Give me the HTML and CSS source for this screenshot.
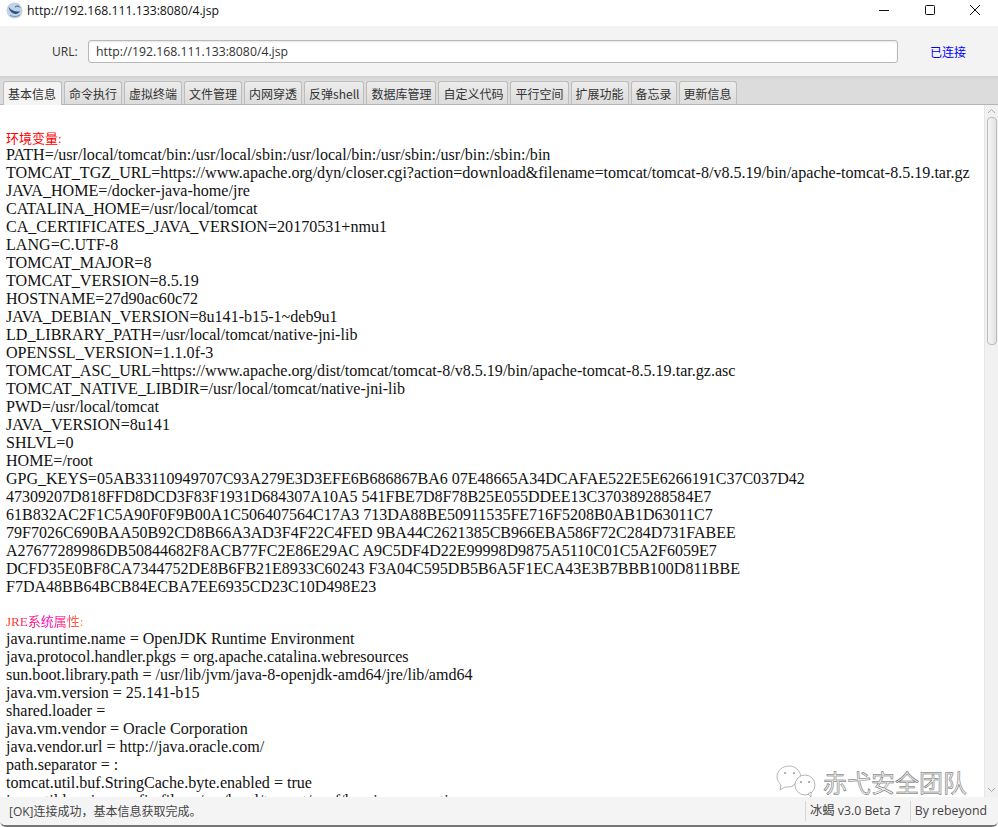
FILE: index.html
```html
<!DOCTYPE html>
<html lang="zh">
<head>
<meta charset="utf-8">
<title>Behinder</title>
<link rel="stylesheet" href="styles.css">
</head>
<body>
<div class="window">
  <header class="titlebar">
    <svg class="app-icon" width="17" height="17" viewBox="0 0 17 17"><circle cx="8.500" cy="8.500" r="8" fill="#bfd2e6"/><path d="M2.500 4.500c1 2 2.500 3 4.500 4s4.500 1.500 7 .5c-1 2.500-4 3.500-6.500 2.500S3 8 2.500 4.500z" fill="#2c4f7f"/><path d="M4 13c3 2 7 2 10 0" fill="none" stroke="#6f8fb3"/><path d="M9 5c2-1.500 4-1 5 .5" fill="none" stroke="#2c4f7f"/></svg>
    <span class="title-text">http://192.168.111.133:8080/4.jsp</span>
    <div class="win-controls">
      <svg width="12" height="12" viewBox="0 0 12 12"><path d="M1 6.500h10" stroke="#111" fill="none"/></svg>
      <svg width="12" height="12" viewBox="0 0 12 12"><rect x="1.500" y="1.500" width="9" height="9" rx="1" stroke="#111" fill="none"/></svg>
      <svg width="12" height="12" viewBox="0 0 12 12"><path d="M1 1l10 10M11 1L1 11" stroke="#111" fill="none"/></svg>
    </div>
  </header>
  <div class="urlbar">
    <label class="url-label">URL:</label>
    <div class="url-input">http://192.168.111.133:8080/4.jsp</div>
    <span class="url-status">已连接</span>
  </div>
  <nav class="tabs">
    <span class="tab active">基本信息</span>
    <span class="tab">命令执行</span>
    <span class="tab">虚拟终端</span>
    <span class="tab">文件管理</span>
    <span class="tab">内网穿透</span>
    <span class="tab">反弹shell</span>
    <span class="tab">数据库管理</span>
    <span class="tab">自定义代码</span>
    <span class="tab">平行空间</span>
    <span class="tab">扩展功能</span>
    <span class="tab">备忘录</span>
    <span class="tab">更新信息</span>
  </nav>
  <main class="content">
    <div class="doc">
      <div class="doc-text">
        <p class="spacer">&nbsp;</p>
        <p class="heading">环境变量:</p>
        <p>PATH=/usr/local/tomcat/bin:/usr/local/sbin:/usr/local/bin:/usr/sbin:/usr/bin:/sbin:/bin</p>
        <p>TOMCAT_TGZ_URL=https://www.apache.org/dyn/closer.cgi?action=download&amp;filename=tomcat/tomcat-8/v8.5.19/bin/apache-tomcat-8.5.19.tar.gz</p>
        <p>JAVA_HOME=/docker-java-home/jre</p>
        <p>CATALINA_HOME=/usr/local/tomcat</p>
        <p>CA_CERTIFICATES_JAVA_VERSION=20170531+nmu1</p>
        <p>LANG=C.UTF-8</p>
        <p>TOMCAT_MAJOR=8</p>
        <p>TOMCAT_VERSION=8.5.19</p>
        <p>HOSTNAME=27d90ac60c72</p>
        <p>JAVA_DEBIAN_VERSION=8u141-b15-1~deb9u1</p>
        <p>LD_LIBRARY_PATH=/usr/local/tomcat/native-jni-lib</p>
        <p>OPENSSL_VERSION=1.1.0f-3</p>
        <p>TOMCAT_ASC_URL=https://www.apache.org/dist/tomcat/tomcat-8/v8.5.19/bin/apache-tomcat-8.5.19.tar.gz.asc</p>
        <p>TOMCAT_NATIVE_LIBDIR=/usr/local/tomcat/native-jni-lib</p>
        <p>PWD=/usr/local/tomcat</p>
        <p>JAVA_VERSION=8u141</p>
        <p>SHLVL=0</p>
        <p>HOME=/root</p>
        <p class="hex">GPG_KEYS=05AB33110949707C93A279E3D3EFE6B686867BA6 07E48665A34DCAFAE522E5E6266191C37C037D42</p>
        <p class="hex">47309207D818FFD8DCD3F83F1931D684307A10A5 541FBE7D8F78B25E055DDEE13C370389288584E7</p>
        <p class="hex">61B832AC2F1C5A90F0F9B00A1C506407564C17A3 713DA88BE50911535FE716F5208B0AB1D63011C7</p>
        <p class="hex">79F7026C690BAA50B92CD8B66A3AD3F4F22C4FED 9BA44C2621385CB966EBA586F72C284D731FABEE</p>
        <p class="hex">A27677289986DB50844682F8ACB77FC2E86E29AC A9C5DF4D22E99998D9875A5110C01C5A2F6059E7</p>
        <p class="hex">DCFD35E0BF8CA7344752DE8B6FB21E8933C60243 F3A04C595DB5B6A5F1ECA43E3B7BBB100D811BBE</p>
        <p class="hex">F7DA48BB64BCB84ECBA7EE6935CD23C10D498E23</p>
        <p class="spacer lower">&nbsp;</p>
        <p class="heading jre">JRE系统属性:</p>
        <p>java.runtime.name = OpenJDK Runtime Environment</p>
        <p>java.protocol.handler.pkgs = org.apache.catalina.webresources</p>
        <p>sun.boot.library.path = /usr/lib/jvm/java-8-openjdk-amd64/jre/lib/amd64</p>
        <p>java.vm.version = 25.141-b15</p>
        <p>shared.loader =</p>
        <p>java.vm.vendor = Oracle Corporation</p>
        <p>java.vendor.url = http://java.oracle.com/</p>
        <p>path.separator = :</p>
        <p>tomcat.util.buf.StringCache.byte.enabled = true</p>
        <p>java.util.logging.config.file = /usr/local/tomcat/conf/logging.properties</p>
      </div>
    </div>
    <div class="scrollbar">
      <svg class="arrow" width="9" height="6" viewBox="0 0 9 6"><path d="M1 5l3.500-3.500L8 5" stroke="#a9a9a9" fill="none"/></svg>
      <div class="thumb"></div>
      <div class="track"></div>
      <svg class="arrow" width="9" height="6" viewBox="0 0 9 6"><path d="M1 1l3.500 3.500L8 1" stroke="#a9a9a9" fill="none"/></svg>
    </div>
    <div class="watermark">
      <svg width="40" height="33" viewBox="0 0 40 33"><g fill="#fff" stroke="#a3a3a3" stroke-width=".8"><path d="M13 1C6 1 1 6 1 12c0 3 2 6 4 8l-1 5 5-3c2 0 6 0 8-1l8-9C24 5 19 1 13 1z"/><ellipse cx="29" cy="20" rx="10" ry="10"/><path d="M32 29l3 3 0-5z"/></g><circle cx="9" cy="8" r="1" fill="#9a9a9a"/><circle cx="18" cy="8" r="1" fill="#9a9a9a"/><circle cx="25" cy="17" r="1" fill="#9a9a9a"/><circle cx="33" cy="17" r="1" fill="#9a9a9a"/></svg>
      <span class="wm-text">赤弋安全团队</span>
    </div>
  </main>
  <footer class="statusbar">
    <span class="status-msg">[OK]连接成功，基本信息获取完成。</span>
    <span class="status-cell ver">冰蝎 v3.0 Beta 7</span>
    <span class="status-cell by">By rebeyond</span>
  </footer>
</div>
</body>
</html>
```

FILE: styles.css
```css
* { box-sizing: border-box; }
html, body { margin: 0; height: 100%; overflow: hidden; background: #fff; }
.window {
  width: 998px; height: 827px; display: flex; flex-direction: column; position: relative; overflow: hidden;
  font-family: "Open Sans", "Noto Sans CJK SC", sans-serif; color: #333;
  border-bottom: 2px solid #777; border-radius: 0 0 6px 6px;
}
.titlebar { height: 26px; flex: none; display: flex; align-items: center; padding: 0 0 5px 6px; background: #fff; }
.app-icon { flex: none; }
.title-text { margin-left: 4px; font: 12.25px/20px "Open Sans", "Noto Sans CJK SC", sans-serif; color: #111; }
.win-controls { margin-left: auto; display: flex; gap: 33.500px; padding-right: 17px; margin-top: -1px; }
.urlbar { height: 50px; flex: none; display: flex; align-items: center; background: #f3f3f3; padding-left: 52px; }
.url-label { font-size: 12px; width: 36px; }
.url-input {
  width: 810px; height: 23px; background: #fff; border: 1px solid #b8b8b8; border-radius: 3px;
  font-size: 12.25px; line-height: 21px; padding-left: 7px; box-shadow: inset 0 1px 2px #e6e6e6;
}
.url-status { margin-left: 32px; font: 12px "Noto Sans CJK SC", sans-serif; color: #0000ff; }
.tabs {
  height: 29px; flex: none; display: flex; align-items: flex-end; gap: 2px; padding-left: 3px;
  background: linear-gradient(#cfcfcf, #dcdcdc 4px); border-bottom: 1px solid #b5b5b5;
}
.tab {
  height: 23px; padding: 0 4px; font: 12px/23px "Noto Sans CJK SC", sans-serif; color: #333; white-space: nowrap;
  background: linear-gradient(#ececec, #dcdcdc); border: 1px solid #bdbdbd; border-bottom: 0; border-radius: 3px 3px 0 0;
}
.tab.active { background: #f4f4f4; margin-bottom: -1px; height: 24px; padding: 0 5px 0 4px; }
.content { flex: 1; min-height: 0; display: flex; position: relative; background: #fff; }
.doc { flex: 1; min-width: 0; overflow: hidden; padding: 9px 0 0 6px; }
.doc-text { font: 16.08px/18px "Liberation Serif", "Noto Sans CJK SC", serif; color: #111; }
.doc-text p { margin: 0; white-space: nowrap; }
.doc-text .hex { font-size: 16.02px; }
.doc-text .spacer { height: 16px; }
.doc-text .spacer.lower { height: 17px; }
.doc-text .heading { color: #f00; font-size: 13px; line-height: 17px; height: 17px; margin-bottom: -1px; }
.doc-text .jre { background: linear-gradient(90deg, #ff3c00, #ff00c8 50%, #ff9000); -webkit-background-clip: text; background-clip: text; color: transparent; width: 84px; margin-bottom: 0; }
.scrollbar { width: 14px; flex: none; background: #f1f1f1; display: flex; flex-direction: column; align-items: center; border-left: 1px solid #e6e6e6; padding: 3px 0 4px; }
.arrow { flex: none; }
.thumb { width: 10px; height: 228px; margin-top: 3px; flex: none; border: 1px solid #bbb; border-radius: 4px; background: linear-gradient(90deg, #f6f6f6, #e2e2e2); }
.track { flex: 1; }
.watermark { position: absolute; left: 776px; bottom: -1px; display: flex; align-items: center; gap: 7px; }
.wm-text { font: 24px/30px "Noto Sans CJK SC", sans-serif; color: #eee; -webkit-text-stroke: .5px #666; }
.statusbar { height: 28px; flex: none; display: flex; align-items: center; background: #f4f4f4; font: 12.3px "Open Sans", "Noto Sans CJK SC", sans-serif; color: #444; padding-left: 9px; position: relative; }
.status-msg { flex: 1; font-size: 12px; }
.status-cell { border-left: 1px solid #d5d5d5; height: 20px; line-height: 20px; padding: 0 9px 0 4px; white-space: nowrap; }
.by { padding-right: 11px; }
```
